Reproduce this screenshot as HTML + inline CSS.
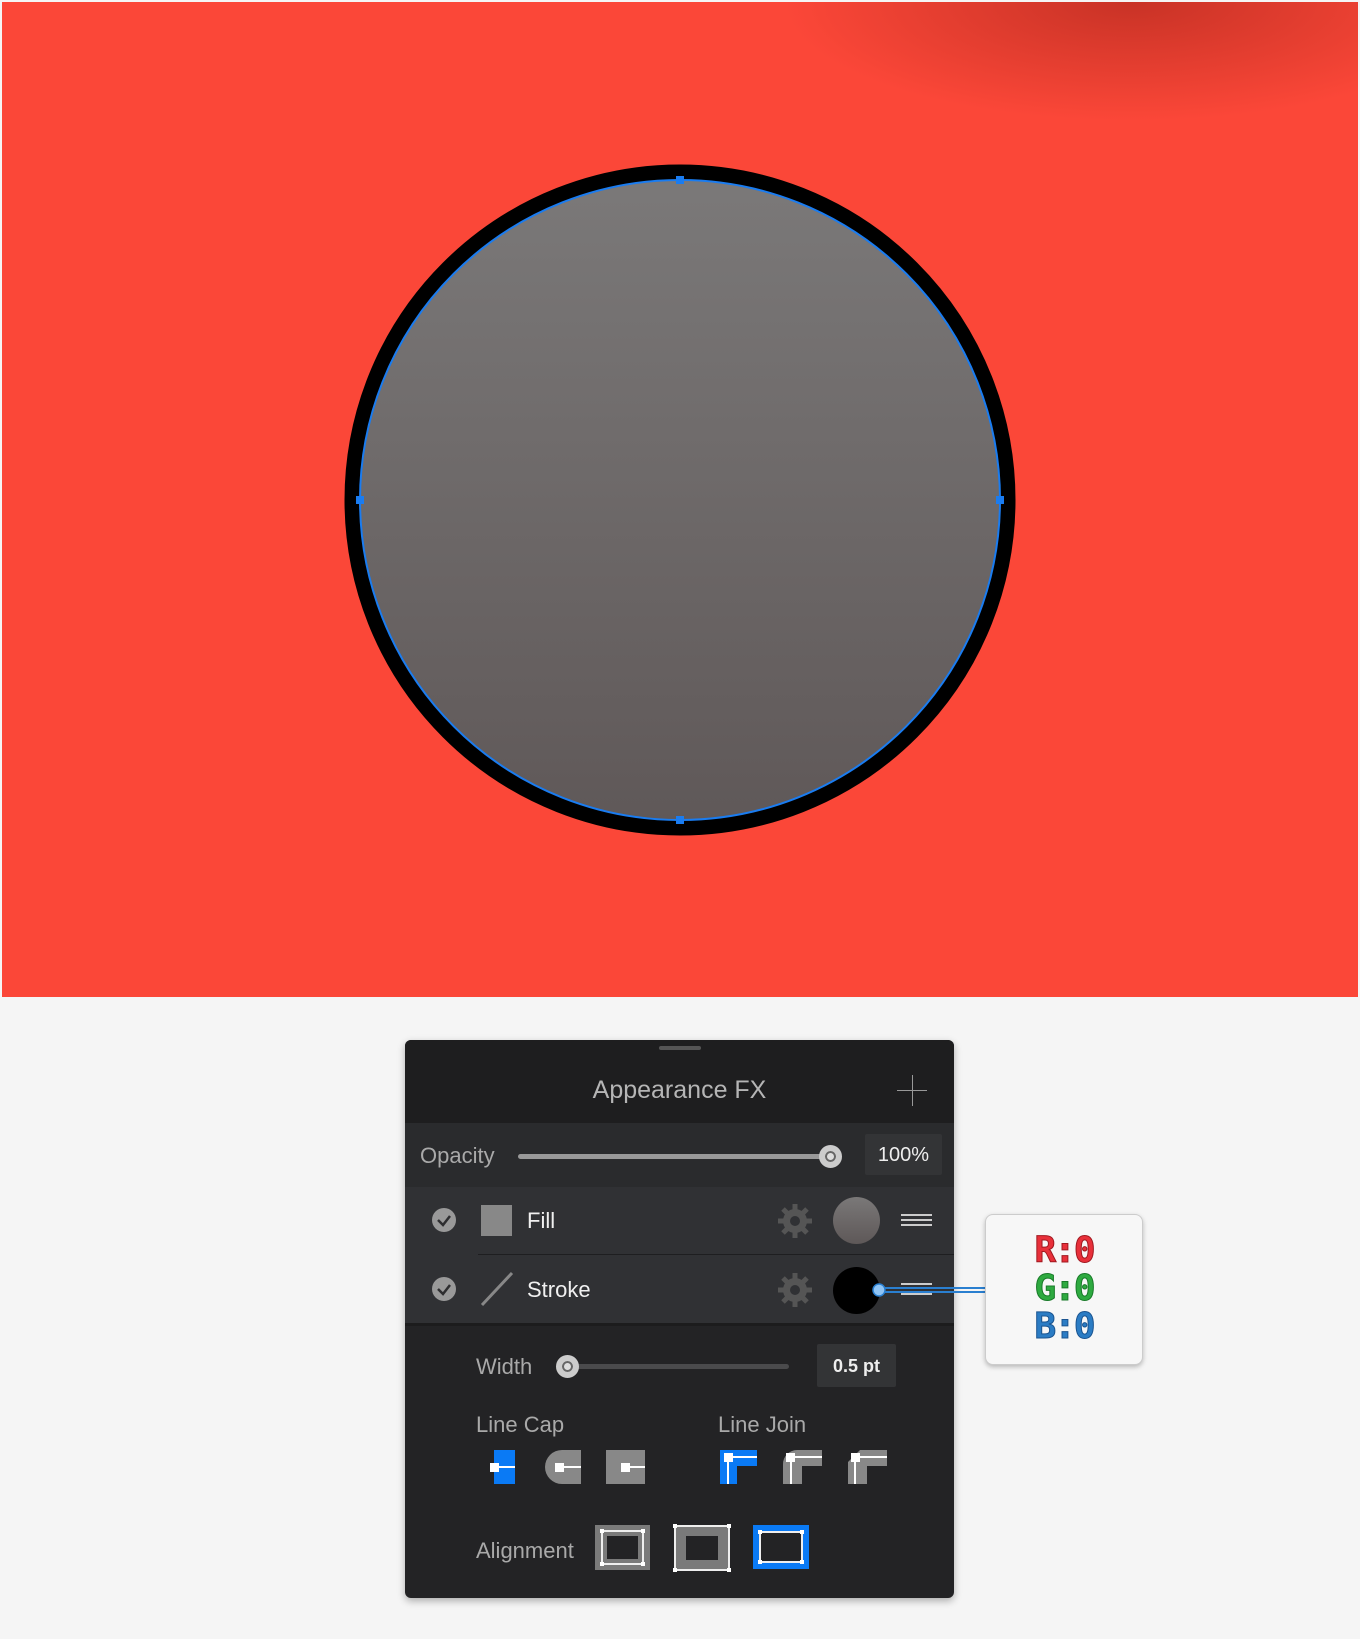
<!DOCTYPE html>
<html><head><meta charset="utf-8"><style>
*{margin:0;padding:0;box-sizing:border-box}
body{width:1360px;height:1639px;background:#f5f5f5;position:relative;overflow:hidden;font-family:"Liberation Sans",sans-serif}
.a{position:absolute}
.t{position:absolute;color:#a9a9a9;font-size:22px;white-space:nowrap;line-height:26px}
</style></head><body>
<div class="a" style="left:2px;top:2px;width:1356px;height:995px;background:#fb4738;overflow:hidden">
 <div class="a" style="left:780px;top:-120px;width:700px;height:240px;border-radius:50%;background:radial-gradient(ellipse at 50% 50%,rgba(150,30,20,.5),rgba(150,30,20,0) 70%)"></div>
</div>
<svg class="a" style="left:0;top:0" width="1360" height="1000">
 <defs><linearGradient id="g" x1="0" y1="0" x2="0" y2="1"><stop offset="0" stop-color="#7b7979"/><stop offset="1" stop-color="#5f5858"/></linearGradient></defs>
 <circle cx="680" cy="500" r="328" fill="url(#g)" stroke="#000" stroke-width="15"/>
 <circle cx="680" cy="500" r="320" fill="none" stroke="#1a7cf0" stroke-width="2"/>
 <rect x="676" y="176" width="8" height="8" fill="#1a7cf0"/><rect x="676" y="816" width="8" height="8" fill="#1a7cf0"/>
 <rect x="356" y="496" width="8" height="8" fill="#1a7cf0"/><rect x="996" y="496" width="8" height="8" fill="#1a7cf0"/>
</svg>
<div class="a" style="left:405px;top:1040px;width:549px;height:558px;background:#232325;border-radius:6px;box-shadow:0 3px 8px rgba(0,0,0,.3);overflow:hidden">
 <div class="a" style="left:0;top:0;width:549px;height:83px;background:#1e1e1f"></div>
 <div class="a" style="left:254px;top:6px;width:42px;height:4px;border-radius:2px;background:#555"></div>
 <div class="t" style="left:0;width:549px;text-align:center;top:37px;font-size:25px;color:#b5b5b5">Appearance FX</div>
 <div class="a" style="left:492px;top:50px;width:30px;height:1px;background:#999"></div>
 <div class="a" style="left:507px;top:35px;width:1px;height:31px;background:#999"></div>
 <div class="a" style="left:0;top:83px;width:549px;height:64px;background:#2a2b2d"></div>
 <div class="t" style="left:15px;top:103px">Opacity</div>
 <div class="a" style="left:113px;top:114px;width:310px;height:5px;border-radius:3px;background:#999"></div>
 <div class="a" style="left:414px;top:105px;width:23px;height:23px;border-radius:50%;background:#ddd;border:6px solid #ccc;box-shadow:inset 0 0 0 2px #666"></div>
 <div class="a" style="left:460px;top:94px;width:77px;height:41px;background:#333436;border-radius:2px;color:#eee;font-size:20px;text-align:center;line-height:43px">100%</div>
 <div class="a" style="left:0;top:147px;width:549px;height:136px;background:#303134"></div>
 <div class="a" style="left:73px;top:214px;width:476px;height:1px;background:#1e1e20"></div>
 <div class="a" style="left:0;top:283px;width:549px;height:3px;background:#1c1c1d"></div>
 <div class="a" style="left:27px;top:168px;width:24px;height:24px;border-radius:50%;background:#999"></div>
 <div class="a" style="left:76px;top:165px;width:31px;height:31px;background:#888"></div>
 <div class="t" style="left:122px;top:168px;color:#f0f0f0">Fill</div>
 <div class="a" style="left:428px;top:157px;width:47px;height:47px;border-radius:50%;background:linear-gradient(#7a7878,#5e5858)"></div>
 <div class="a" style="left:496px;top:174px;width:31px;height:12px;border-top:2px solid #ccc;border-bottom:2px solid #ccc"></div>
 <div class="a" style="left:496px;top:179px;width:31px;height:2px;background:#ccc"></div>
 <div class="a" style="left:27px;top:237px;width:24px;height:24px;border-radius:50%;background:#999"></div>
 <svg class="a" style="left:0;top:0" width="549" height="558">
  <path d="M33 180l5 5 7-9M33 249l5 5 7-9" stroke="#2e2e30" stroke-width="2.5" fill="none"/>
  <path d="M77 265L107 233" stroke="#888" stroke-width="3"/>
  <g fill="#555"><circle cx="390" cy="181" r="12"/><circle cx="390" cy="250" r="12"/></g>
  <g stroke="#555" stroke-width="5"><path d="M390 164v34M373 181h34M378 169l24 24M402 169l-24 24M390 233v34M373 250h34M378 238l24 24M402 238l-24 24"/></g>
  <g fill="#303134"><circle cx="390" cy="181" r="5"/><circle cx="390" cy="250" r="5"/></g>
 </svg>
 <div class="t" style="left:122px;top:237px;color:#f0f0f0">Stroke</div>
 <div class="a" style="left:428px;top:227px;width:47px;height:47px;border-radius:50%;background:#000"></div>
 <div class="a" style="left:496px;top:243px;width:31px;height:12px;border-top:2px solid #ccc;border-bottom:2px solid #ccc"></div>
 <div class="t" style="left:71px;top:314px">Width</div>
 <div class="a" style="left:154px;top:324px;width:230px;height:5px;border-radius:3px;background:#4a4a4c"></div>
 <div class="a" style="left:151px;top:315px;width:23px;height:23px;border-radius:50%;background:#ddd;border:6px solid #ccc;box-shadow:inset 0 0 0 2px #666"></div>
 <div class="a" style="left:412px;top:304px;width:79px;height:43px;background:#333436;border-radius:2px;color:#eee;font-size:18px;font-weight:bold;text-align:center;line-height:45px">0.5 pt</div>
 <div class="t" style="left:71px;top:372px">Line Cap</div>
 <div class="t" style="left:313px;top:372px">Line Join</div>
 <svg class="a" style="left:0;top:0" width="549" height="558">
  <rect x="89" y="410" width="21" height="34" fill="#0a7af5"/><rect x="85" y="423" width="9" height="9" fill="#fff"/><path d="M90 427h20" stroke="#fff" stroke-width="2"/>
  <path d="M157 410h19v34h-19a17 17 0 0 1 0-34z" fill="#888"/><rect x="150" y="423" width="9" height="9" fill="#fff"/><path d="M155 427h21" stroke="#fff" stroke-width="2"/>
  <rect x="201" y="410" width="39" height="34" fill="#888"/><rect x="216" y="423" width="9" height="9" fill="#fff"/><path d="M220 427h20" stroke="#fff" stroke-width="2"/>
  <path d="M315 410h37v16h-20v18h-17z" fill="#0a7af5"/><rect x="319" y="413" width="9" height="9" fill="#fff"/><path d="M323 417h29M323 417v27" stroke="#fff" stroke-width="2"/>
  <path d="M392 410h25v16h-20v18h-19v-20a14 14 0 0 1 14-14z" fill="#888"/><rect x="381" y="413" width="9" height="9" fill="#fff"/><path d="M386 417h31M386 417v27" stroke="#fff" stroke-width="2"/>
  <path d="M455 410h27v16h-20v18h-19v-22z" fill="#888"/><rect x="446" y="413" width="9" height="9" fill="#fff"/><path d="M450 417h32M450 417v27" stroke="#fff" stroke-width="2"/>
  <rect x="190" y="485" width="55" height="45" fill="#7a7a7a"/><rect x="197" y="491" width="41" height="33" fill="none" stroke="#eee" stroke-width="2"/><rect x="202" y="496" width="31" height="23" fill="#232325"/>
  <rect x="270" y="486" width="54" height="44" fill="#7a7a7a" stroke="#eee" stroke-width="2"/><rect x="281" y="496" width="32" height="24" fill="#232325"/>
  <rect x="348" y="485" width="56" height="44" fill="#0a7af5"/><rect x="355" y="492" width="42" height="30" fill="#232325" stroke="#eee" stroke-width="2"/>
  <g fill="#fff"><rect x="195" y="489" width="4" height="4"/><rect x="236" y="489" width="4" height="4"/><rect x="195" y="522" width="4" height="4"/><rect x="236" y="522" width="4" height="4"/><rect x="268" y="484" width="4" height="4"/><rect x="322" y="484" width="4" height="4"/><rect x="268" y="528" width="4" height="4"/><rect x="322" y="528" width="4" height="4"/><rect x="353" y="490" width="4" height="4"/><rect x="395" y="490" width="4" height="4"/><rect x="353" y="520" width="4" height="4"/><rect x="395" y="520" width="4" height="4"/></g>
 </svg>
 <div class="t" style="left:71px;top:498px">Alignment</div>
</div>
<svg class="a" style="left:0;top:0" width="1360" height="1639">
 <path d="M878 1288h108M878 1292h108" stroke="#2a7fd0" stroke-width="2"/>
 <circle cx="879" cy="1290" r="6" fill="#8fc4f5" stroke="#2a7fd0" stroke-width="1.5"/>
</svg>
<div class="a" style="left:985px;top:1214px;width:158px;height:151px;background:#f7f7f7;border:1px solid #ccc;border-radius:8px;box-shadow:0 2px 5px rgba(0,0,0,.25);font-family:'DejaVu Sans Mono',monospace;font-weight:bold;font-size:36px;line-height:38px;text-align:center;padding-top:17px;letter-spacing:-2px">
 <div style="color:#e8303a;-webkit-text-stroke:1px #a01820">R:0</div><div style="color:#2eaa40;-webkit-text-stroke:1px #187a28">G:0</div><div style="color:#2b7cc4;-webkit-text-stroke:1px #1a5490">B:0</div>
</div>
</body></html>
